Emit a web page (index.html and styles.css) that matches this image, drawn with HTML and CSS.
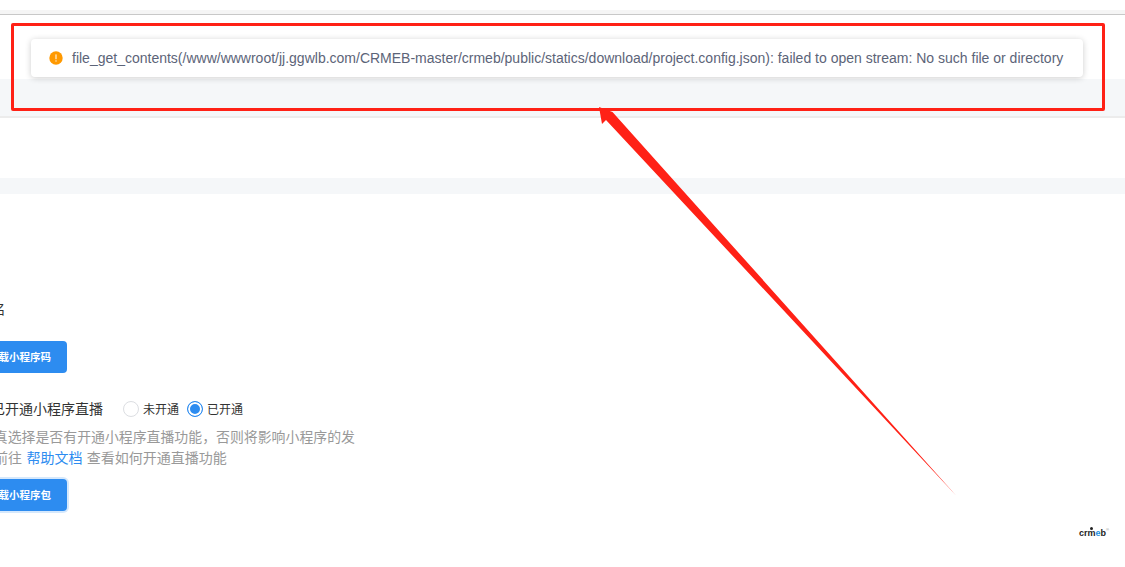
FILE: index.html
```html
<!DOCTYPE html>
<html lang="zh-CN">
<head>
<meta charset="utf-8">
<title>CRMEB</title>
<link rel="stylesheet" href="styles.css">
</head>
<body>
<div class="page">
  <div class="band-top"></div>
  <div class="header-space"></div>
  <div class="tabs-band"></div>
  <div class="white-a"></div>
  <div class="band-mid"></div>
  <main class="form">
    <p class="name-row">程序名</p>
    <button class="btn" type="button">下载小程序码</button>
    <div class="live-row">
      <span class="live-label">是否已开通小程序直播</span>
      <span class="radio"><i class="dot"></i><span class="radio-text">未开通</span></span>
      <span class="radio"><i class="dot on"></i><span class="radio-text">已开通</span></span>
    </div>
    <p class="help help-one">请认真选择是否有开通小程序直播功能，否则将影响小程序的发</p>
    <p class="help">您可前往 <a class="link" href="#">帮助文档</a> 查看如何开通直播功能</p>
    <button class="btn btn-focus" type="button">下载小程序包</button>
  </main>
</div>

<div class="toast">
  <svg class="toast-icon" width="14" height="14" viewBox="0 0 14 14"><circle cx="7" cy="7" r="6.7" fill="#ff9900"/><rect x="6.4" y="3.4" width="1.2" height="4.8" fill="#fff" opacity=".85"/><rect x="6.4" y="9.3" width="1.2" height="1.3" fill="#fff" opacity=".85"/></svg>
  <span class="toast-text">file_get_contents(/www/wwwroot/jj.ggwlb.com/CRMEB-master/crmeb/public/statics/download/project.config.json): failed to open stream: No such file or directory</span>
</div>

<div class="red-box"></div>
<svg class="arrow" width="1125" height="567" viewBox="0 0 1125 567"><polygon points="599,107 612.5,112 956.5,496 606,120 602,124" fill="#ff2116"/></svg>

<div class="brand"><span>cr</span><span class="brand-m">m</span><span class="brand-e">e</span><span>b</span><sup class="brand-r">®</sup></div>
</body>
</html>
```
FILE: styles.css
```css
* { box-sizing: border-box; }
html, body { margin: 0; padding: 0; height: 100%; overflow: hidden; background: #fff; }
body { font-family: "Liberation Sans", "Noto Sans CJK SC", sans-serif; }
.page { display: flex; flex-direction: column; }
.band-top { height: 5px; margin-top: 10px; background: #f5f5f5; border-bottom: 1px solid #c8c8c8; }
.header-space { height: 64px; }
.tabs-band { height: 39px; background: #f5f7f9; border-bottom: 2px solid #ececec; }
.white-a { height: 60px; }
.band-mid { height: 16px; background: #f5f7f9; }
.form { display: flex; flex-direction: column; align-items: flex-start; margin-left: -37px; font-family: "Liberation Sans", "Noto Sans CJK SC", sans-serif; font-size: 14px; color: #333; }
.name-row { margin: 106px 0 0 2px; line-height: 20px; font-size: 13.5px; }
.btn { margin-top: 21px; height: 32px; width: 104px; padding: 0 16px 2px 0; text-align: right; border: 0; border-radius: 4px; background: #2d8cf0; color: #fff; font: 700 10.5px "Noto Sans CJK SC", sans-serif; }
.btn-focus { margin-top: 10px; box-shadow: 0 0 0 2px rgba(45, 140, 240, .2); }
.live-row { display: flex; align-items: center; margin-top: 26px; height: 20px; }
.live-label { width: 160px; margin-bottom: 2px; }
.radio { display: inline-flex; align-items: center; font-size: 12px; margin-right: 8px; color: #333; }
.radio-text { margin-bottom: 2px; }
.dot { width: 16px; height: 16px; margin-right: 4px; border-radius: 50%; border: 1px solid #dcdee2; background: #fff; }
.dot.on { border-color: #2d8cf0; box-shadow: inset 0 0 0 2px #fff; background: #2d8cf0; }
.help { margin: 0 0 0 3px; font-size: 14px; word-spacing: .5px; line-height: 21px; color: #999; white-space: nowrap; }
.help-one { margin-top: 8px; font-size: 13.9px; }
.link { color: #2d8cf0; text-decoration: none; }
.toast { position: absolute; left: 31px; top: 39px; width: 1052px; height: 38px; display: flex; align-items: center; padding-left: 18px; background: #fff; border-radius: 4px; box-shadow: 0 1px 6px rgba(0, 0, 0, .2); }
.toast-icon { margin-right: 9px; flex: none; }
.toast-text { font-size: 14px; color: #5c6478; white-space: nowrap; }
.red-box { position: absolute; left: 11px; top: 23px; width: 1094px; height: 88px; border: 3px solid #ff2116; border-radius: 2px; }
.arrow { position: absolute; left: 0; top: 0; }
.brand { position: absolute; left: 1079px; top: 527px; font: bold 9px/12px "Liberation Sans", sans-serif; color: #222; }
.brand-m { position: relative; }
.brand-m::before { content: ""; position: absolute; left: 2.5px; top: -1px; width: 3px; height: 3px; border-radius: 50%; background: #222; }
.brand-e { color: #1d8fe0; }
.brand-r { position: absolute; top: -3px; left: 27px; font-size: 4px; font-weight: 400; color: #888; }
```
